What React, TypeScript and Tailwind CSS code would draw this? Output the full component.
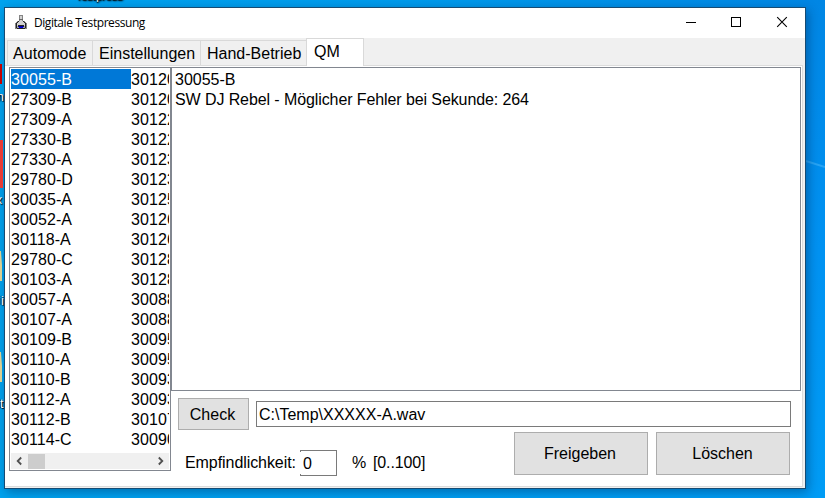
import type { ReactNode } from "react";

const ROWS: [string, string][] = [
  ["30055-B", "30120-A"],
  ["27309-B", "30120-B"],
  ["27309-A", "30122-A"],
  ["27330-B", "30122-B"],
  ["27330-A", "30123-A"],
  ["29780-D", "30123-B"],
  ["30035-A", "30125-A"],
  ["30052-A", "30126-A"],
  ["30118-A", "30126-B"],
  ["29780-C", "30128-A"],
  ["30103-A", "30128-B"],
  ["30057-A", "30088-A"],
  ["30107-A", "30088-B"],
  ["30109-B", "30095-A"],
  ["30110-A", "30095-B"],
  ["30110-B", "30093-A"],
  ["30112-A", "30093-B"],
  ["30112-B", "30107-B"],
  ["30114-C", "30090-A"],
];

function FlaskIcon() {
  return (
    <svg width="12" height="16" viewBox="0 0 12 16" shapeRendering="crispEdges">
      <path d="M4 0h4v6h2v1h1v1h1v6H0V8h1V7h1V6h2z" fill="#858585" />
      <path d="M5 1h2v5h1v1h1v1h1v3H2V8h1V7h1V6h1z" fill="#d0d0d0" />
      <path d="M4 4h4v1H4z" fill="#666" />
      <path d="M3 6h1v1H3zM8 6h1v1H8zM2 7h1v1H2zM9 7h1v1H9zM1 8h1v5H1zM10 8h1v5h-1zM2 13h8v1H2z" fill="#222" />
      <path d="M3 10h6v1H3z" fill="#222" />
      <path d="M2 11h8v2H2z" fill="#a0a0a0" />
      <path d="M4 12h4v1H4z" fill="#0000e8" />
      <path d="M3 11h6v1H3z" fill="#000090" />
    </svg>
  );
}

function TitleBar() {
  return (
    <div className="flex h-[30px] shrink-0 items-center bg-white pl-[10px]">
      <FlaskIcon />
      <span className="ml-[7px] font-['Open_Sans','Noto_Sans',sans-serif] text-[12px] leading-[16px] tracking-[-0.44px] whitespace-nowrap">
        Digitale Testpressung
      </span>
      <div className="ml-auto flex">
        <svg width="46" height="30" viewBox="0 0 46 30" shapeRendering="crispEdges">
          <path d="M18 14h10v1H18z" />
        </svg>
        <svg width="45" height="30" viewBox="0 0 45 30" shapeRendering="crispEdges">
          <path d="M17.5 9.5h9v9h-9z" fill="none" stroke="#000" />
        </svg>
        <svg width="46" height="30" viewBox="0 0 46 30">
          <path d="M18.2 9.2l9.6 9.6M27.8 9.2l-9.6 9.6" stroke="#000" strokeWidth="1.1" />
        </svg>
      </div>
    </div>
  );
}

function Tab({ className, children }: { className: string; children: ReactNode }) {
  return (
    <div className={`flex h-[25px] items-center border-t border-l border-[#d9d9d9] bg-[#f0f0f0] pt-[2px] whitespace-nowrap ${className}`}>
      {children}
    </div>
  );
}

function PushButton({ className, children }: { className: string; children: ReactNode }) {
  return (
    <button className={`flex items-center justify-center border border-[#adadad] bg-[#e1e1e1] ${className}`}>
      {children}
    </button>
  );
}

function ListBox() {
  return (
    <div className="flex h-[404px] w-[162px] shrink-0 flex-col border border-[#828790] bg-white p-px">
      <div className="h-[384px] overflow-hidden tracking-[0.08px]">
        {ROWS.map(([left, right], i) => (
          <div key={left} className="flex h-[20px] leading-[22px] whitespace-nowrap">
            <span className={i === 0 ? "w-[120px] shrink-0 bg-[#0078d7] text-white" : "w-[120px] shrink-0"}>{left}</span>
            <span className="w-[38px] shrink-0 overflow-hidden">{right}</span>
          </div>
        ))}
      </div>
      <div className="flex h-[16px] items-center bg-[#f0f0f0]">
        <svg width="17" height="16" viewBox="0 0 17 16">
          <path d="M10.2 4.5L6.7 8l3.5 3.5" fill="none" stroke="#505050" strokeWidth="1.8" />
        </svg>
        <div className="h-[15px] w-[17px] bg-[#cdcdcd]" />
        <svg className="ml-auto" width="17" height="16" viewBox="0 0 17 16">
          <path d="M6.8 4.5L10.3 8l-3.5 3.5" fill="none" stroke="#505050" strokeWidth="1.8" />
        </svg>
      </div>
    </div>
  );
}

function Desktop() {
  return (
    <svg className="absolute top-0 left-0" width="825" height="498">
      <defs>
        <linearGradient id="top" x1="0" y1="0" x2="1" y2="0">
          <stop offset="0" stopColor="#00a3ef" />
          <stop offset="0.5" stopColor="#009bec" />
          <stop offset="1" stopColor="#0086e4" />
        </linearGradient>
        <linearGradient id="side" x1="0" y1="0" x2="0" y2="1">
          <stop offset="0" stopColor="#0086e4" />
          <stop offset="0.5" stopColor="#0092f2" />
          <stop offset="1" stopColor="#009cf5" />
        </linearGradient>
      </defs>
      <path d="M0 0h825v8H0z" fill="url(#top)" />
      <path d="M804 0h21v498h-21z" fill="url(#side)" />
      <path d="M806 161l19 6" stroke="#28a4f4" strokeWidth="2" />
    </svg>
  );
}

function DesktopIcons() {
  return (
    <>
      <svg className="absolute top-0 left-0" width="4" height="498">
        <path d="M0 64h2v20H0z" fill="#c40000" />
        <path d="M0 140h3v48H0z" fill="#e83b35" />
        <path d="M0 251h1l1 14v16H0zM0 352h1l1 14v16H0z" fill="#d9cf94" />
      </svg>
      <div className="absolute top-0 left-0 h-[5px] w-[160px] overflow-hidden">
        <div className="absolute top-[-10px] left-[76px] text-[11px] leading-[12px] text-white [text-shadow:0_1px_1px_#000,1px_1px_2px_#000]">
          Testpress
        </div>
      </div>
      <div className="absolute top-0 left-0 h-[498px] w-[4px] overflow-hidden text-[12px] leading-[14px] text-white [text-shadow:1px_1px_1px_#000,-1px_0_1px_#000]">
        <span className="absolute top-[90px] left-[-3px]">n</span>
        <span className="absolute top-[193px] left-[-4px]">x</span>
        <span className="absolute top-[294px] left-[1px]">i</span>
        <span className="absolute top-[397px] left-0">t</span>
      </div>
    </>
  );
}

export default function App() {
  return (
    <div className="relative h-[498px] w-[825px] overflow-hidden bg-linear-to-r from-[#00a3ef] to-[#009cf5] pt-[7px] pl-[4px] font-['Liberation_Sans',Arial,sans-serif] text-[16px] leading-[20px] text-black">
      <Desktop />
      <div className="relative flex h-[482px] w-[802px] flex-col border border-[#164b73] bg-[#f0f0f0] shadow-[2px_3px_10px_rgba(0,30,70,0.4)]">
        <TitleBar />
        <div className="flex h-[27px] shrink-0 items-end pl-[2px]">
          <Tab className="w-[85px] pl-[5px] tracking-[0.06px]">Automode</Tab>
          <Tab className="w-[108px] pl-[6px]">Einstellungen</Tab>
          <Tab className="w-[106px] pl-[6px]">Hand-Betrieb</Tab>
          <div className="z-10 mb-[-1px] flex h-[28px] w-[58px] border border-b-0 border-[#d9d9d9] bg-white pt-[3px] pl-[7px]">QM</div>
        </div>
        <div className="mr-[2px] flex h-[422px] shrink-0 border-t border-r border-b border-[#dcdcdc] bg-white pt-px pl-[4px]">
          <ListBox />
          <div className="flex flex-1 flex-col">
            <div className="h-[324px] w-[630px] shrink-0 border border-[#828790] bg-white pt-[2px] pl-[3px]">
              <p>30055-B</p>
              <p className="tracking-[-0.095px]">SW DJ Rebel - Möglicher Fehler bei Sekunde: 264</p>
            </div>
            <div className="mt-[7px] flex shrink-0 items-start pl-[7px]">
              <PushButton className="h-[32px] w-[71px] pt-[2px] pr-[2px]">Check</PushButton>
              <div className="mt-[3px] ml-[7px] h-[26px] w-[535px] border border-[#7a7a7a] pt-[3px] pl-[2px]">C:\Temp\XXXXX-A.wav</div>
            </div>
            <div className="mt-[2px] flex shrink-0 items-start pl-[14px] whitespace-nowrap">
              <span className="mt-[21px] w-[115px] tracking-[-0.07px]">Empfindlichkeit:</span>
              <div className="mt-[18px] flex h-[26px] w-[37px] flex-col justify-between border-y border-r border-[#7a7a7a]">
                <span className="h-px w-px bg-[#7a7a7a]" />
                <span className="pt-[2px] pl-[3px]">0</span>
                <span className="h-[3px] w-px bg-[#7a7a7a]" />
              </div>
              <span className="mt-[21px] ml-[15px] w-[21px]">%</span>
              <span className="mt-[21px] w-[141px] tracking-[-0.12px]">[0..100]</span>
              <PushButton className="h-[43px] w-[134px] pr-[2px]">Freigeben</PushButton>
              <PushButton className="ml-[8px] h-[43px] w-[134px] pr-px">Löschen</PushButton>
            </div>
          </div>
        </div>
        <div className="h-px" />
      </div>
      <DesktopIcons />
    </div>
  );
}
